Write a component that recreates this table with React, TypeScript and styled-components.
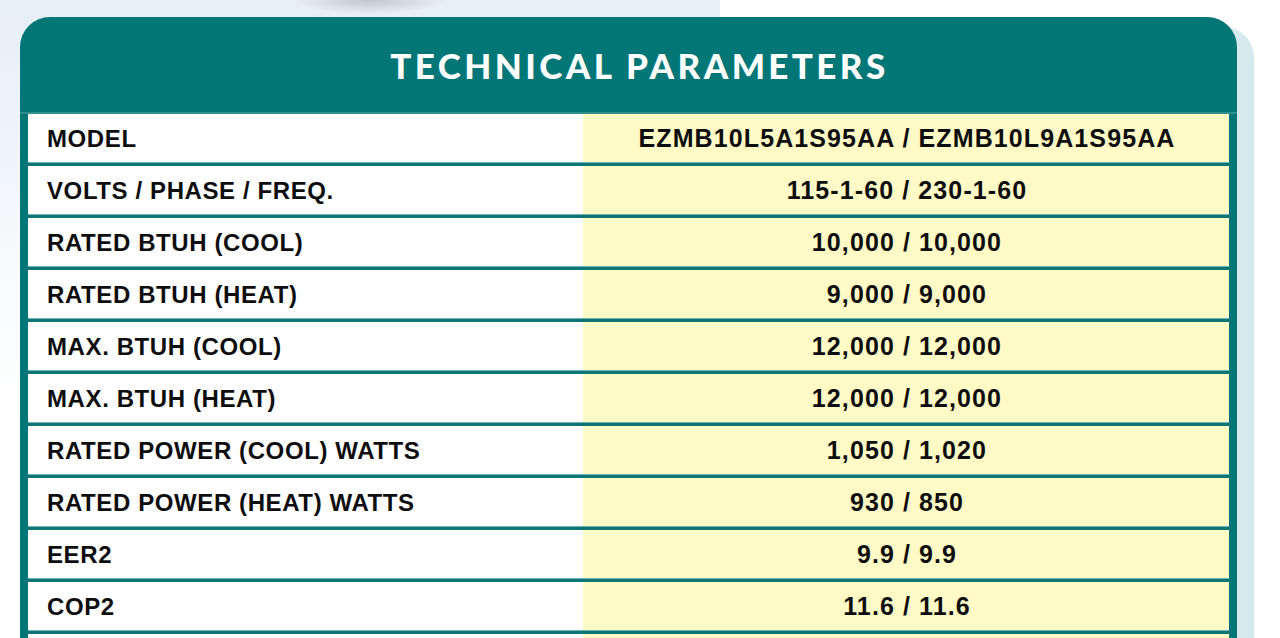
import React from "react";
import styled, { createGlobalStyle } from "styled-components";

const GlobalStyle = createGlobalStyle`
  html, body {
    margin: 0;
    padding: 0;
  }
  body {
    width: 1280px;
    height: 638px;
    overflow: hidden;
    background:
      radial-gradient(ellipse 75px 14px at 370px 0px, rgba(160, 165, 172, 0.55), rgba(160, 165, 172, 0) 100%),
      linear-gradient(90deg, rgba(255, 255, 255, 0) 720px, #ffffff 720px),
      linear-gradient(180deg, #e6eef6 0px, #edf3f9 120px, #f8fafc 260px, #ffffff 420px);
    font-family: "Liberation Sans", Arial, sans-serif;
  }
`;

const Page = styled.div`
  padding: 17px 0 0 20px;
`;

const Card = styled.section`
  width: 1217px;
  background: #007676;
  border-radius: 30px 30px 0 0;
  box-shadow: 17px 10px 0 #d5eaee;
  padding: 0 8px 0 8px;
  box-sizing: border-box;
`;

const Header = styled.header`
  height: 95px;
  display: flex;
  align-items: center;
  justify-content: center;
  border-bottom: 2px solid #2f8f8f;
  margin: 0 -8px;
`;

const Title = styled.h1`
  margin: 0;
  padding: 0 0 0 22px;
  color: #ffffff;
  font-family: Lato, "Open Sans", sans-serif;
  font-weight: 900;
  font-size: 35px;
  letter-spacing: 3.4px;
`;

const Table = styled.div`
  display: grid;
  grid-template-columns: 555px 1fr;
  background: #ffffff;
`;

const Cell = styled.div<{ $value?: boolean }>`
  height: 49px;
  display: flex;
  align-items: center;
  justify-content: ${(p) => (p.$value ? "center" : "flex-start")};
  padding: ${(p) => (p.$value ? "0 0 0 2px" : "0 0 0 19px")};
  background: ${(p) => (p.$value ? "#fffac6" : "#ffffff")};
  border-bottom: 3px solid #0d7777;
  box-shadow: inset 0 -1px 0 #6fb3b3;
  color: #0e0e0e;
  font-weight: 700;
  font-size: ${(p) => (p.$value ? "25px" : "24px")};
  letter-spacing: ${(p) => (p.$value ? "1.1px" : "0.6px")};
`;

const rows: [string, string][] = [
  ["MODEL", "EZMB10L5A1S95AA / EZMB10L9A1S95AA"],
  ["VOLTS / PHASE / FREQ.", "115-1-60 / 230-1-60"],
  ["RATED BTUH (COOL)", "10,000 / 10,000"],
  ["RATED BTUH (HEAT)", "9,000 / 9,000"],
  ["MAX. BTUH (COOL)", "12,000 / 12,000"],
  ["MAX. BTUH (HEAT)", "12,000 / 12,000"],
  ["RATED POWER (COOL) WATTS", "1,050 / 1,020"],
  ["RATED POWER (HEAT) WATTS", "930 / 850"],
  ["EER2", "9.9 / 9.9"],
  ["COP2", "11.6 / 11.6"],
  ["", ""],
];

export default function App() {
  return (
    <>
      <GlobalStyle />
      <Page>
        <Card>
          <Header>
            <Title>TECHNICAL PARAMETERS</Title>
          </Header>
          <Table>
            {rows.map(([label, value], i) => (
              <React.Fragment key={i}>
                <Cell>{label}</Cell>
                <Cell $value>{value}</Cell>
              </React.Fragment>
            ))}
          </Table>
        </Card>
      </Page>
    </>
  );
}
